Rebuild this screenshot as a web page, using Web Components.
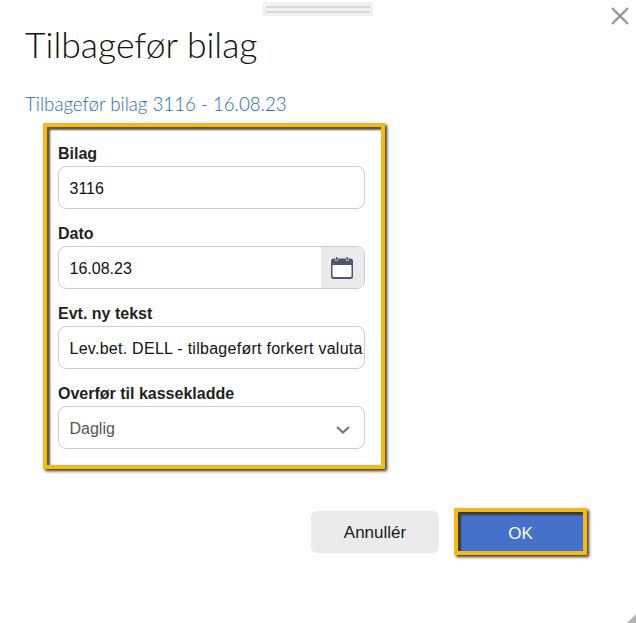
<!DOCTYPE html>
<html lang="da">
<head>
<meta charset="utf-8">
<title>Tilbagefør bilag</title>
<style>
html,body{margin:0;padding:0;background:#fff;}
body{font-family:"Liberation Sans",Arial,sans-serif;}
</style>
</head>
<body>

<template id="dialog-tpl">
<style>
:host{
    display:block;
    position:relative;
    width:636px;
    height:623px;
    background:#fff;
    overflow:hidden;
    box-sizing:border-box;
    padding:24px 0 0 25px;
}
.handle{
    position:absolute;
    top:2px;
    left:263px;
    width:110px;
    height:14px;
    background:#f1f1f1;
}
.handle::before,.handle::after{
    content:'';
    position:absolute;
    left:3px;
    right:3px;
    height:2px;
    background:#d8d8d8;
}
.handle::before{top:4px;}
.handle::after{top:9px;}
.close{
    position:absolute;
    top:7px;
    left:611px;
    width:18px;
    height:18px;
}
.grip{
    position:absolute;
    right:0;
    bottom:0;
    width:0;
    height:0;
    border-style:solid;
    border-width:0 0 9px 9px;
    border-color:transparent transparent #b4b4b4 transparent;
}
h1{
    margin:0;
    font:300 35.5px/42px Lato,"Open Sans",sans-serif;
    color:#111;
}
h2{
    margin:28px 0 0;
    font:300 18.7px/20px Lato,"Open Sans",sans-serif;
    color:#1c6cb0;
}
.body{margin:9px 0 0 18px;}
.actions{
    display:flex;
    align-items:center;
    justify-content:flex-end;
    gap:15px;
    margin:39px 49px 0 0;
}
</style>
<div class="handle"></div>
<svg class="close" viewBox="0 0 18 18" fill="none" stroke="#959595" stroke-width="2.4"><path d="M1 1 L17 17 M17 1 L1 17"/></svg>
<h1><slot name="title"></slot></h1>
<h2><slot name="subtitle"></slot></h2>
<div class="body"><slot></slot></div>
<div class="actions"><slot name="actions"></slot></div>
<div class="grip"></div>
</template>

<template id="frame-tpl">
<style>
:host{
    display:flex;
    flex-direction:column;
    gap:14px;
    box-sizing:border-box;
    width:342px;
    height:346px;
    padding:16px 16px 16px 11px;
    background:#fff;
    border:4px solid #ffb900;
    box-shadow:inset 3px 3px 2px #555, 2px 2px 3px #333;
}
</style>
<slot></slot>
</template>

<template id="field-tpl">
<style>
:host{
    display:block;
    font-family:"Liberation Sans",Arial,sans-serif;
}
.label{
    font-size:16px;
    line-height:22px;
    font-weight:bold;
    color:#1f1f1f;
    margin-bottom:1px;
}
.box{
    display:flex;
    align-items:stretch;
    box-sizing:border-box;
    height:43px;
    border:1px solid #cdcdcd;
    border-radius:8px;
    overflow:hidden;
    background:#fff;
}
.value{
    flex:1;
    min-width:0;
    display:flex;
    align-items:center;
    padding:2px 0 0 10.5px;
    font-size:16px;
    white-space:nowrap;
    overflow:hidden;
    color:#111;
}
:host([type=select]) .value{color:#555;}
:host([wide]) .value{letter-spacing:.27px;}
.addon{display:none;}
:host([type=date]) .addon{
    display:flex;
    align-items:center;
    justify-content:center;
    width:43px;
    background:#ebebeb;
}
.chev{display:none;}
:host([type=select]) .chev{
    display:flex;
    align-items:center;
    justify-content:center;
    width:42px;
    padding-top:4px;
}
</style>
<div class="label"><slot name="label"></slot></div>
<div class="box">
    <div class="value"><slot></slot></div>
    <div class="addon">
        <svg width="24" height="24" viewBox="0 0 24 24" style="margin-left:-1px">
            <rect x="1" y="2.5" width="22" height="20.5" rx="2.5" fill="#51566f"/>
            <rect x="2.5" y="9" width="19" height="12" rx="1" fill="#fff"/>
            <rect x="5.5" y="1" width="2.5" height="4" fill="#ebebeb"/>
            <rect x="16" y="1" width="2.5" height="4" fill="#ebebeb"/>
            <rect x="6" y="1" width="1.5" height="3.5" fill="#51566f"/>
            <rect x="16.5" y="1" width="1.5" height="3.5" fill="#51566f"/>
        </svg>
    </div>
    <div class="chev">
        <svg width="14" height="8" viewBox="0 0 14 8" fill="none" stroke="#757575" stroke-width="2.2"><path d="M1 1 L7 6.5 L13 1"/></svg>
    </div>
</div>
</template>

<template id="button-tpl">
<style>
:host{
    display:inline-flex;
    align-items:center;
    justify-content:center;
    box-sizing:border-box;
    width:128px;
    height:42px;
    border-radius:6px;
    background:#ebebeb;
    color:#1a1a1a;
    font:17px "Liberation Sans",Arial,sans-serif;
    padding-top:3px;
}
:host([primary]){
    width:133px;
    height:47px;
    border-radius:0;
    background:#4472ca;
    color:#fff;
    font-size:17px;
    padding-top:4px;
    border:4px solid #ffb900;
    box-shadow:inset 3px 3px 2px #2a3a60, 2px 2px 3px #333;
}
</style>
<slot></slot>
</template>

<script>
function define(name, tplId){
    customElements.define(name, class extends HTMLElement{
        constructor(){
            super()
            this.attachShadow({mode:'open'})
            this.shadowRoot.appendChild(document.getElementById(tplId).content.cloneNode(true))
        }
    })
}

define('bilag-dialog','dialog-tpl')
define('bilag-frame','frame-tpl')
define('bilag-field','field-tpl')
define('bilag-button','button-tpl')
</script>

<bilag-dialog>
    <span slot="title">Tilbagefør bilag</span>
    <span slot="subtitle">Tilbagefør bilag 3116 - 16.08.23</span>
    <bilag-frame>
        <bilag-field><span slot="label">Bilag</span>3116</bilag-field>
        <bilag-field type="date"><span slot="label">Dato</span>16.08.23</bilag-field>
        <bilag-field wide><span slot="label">Evt. ny tekst</span>Lev.bet. DELL - tilbageført forkert valuta</bilag-field>
        <bilag-field type="select"><span slot="label">Overfør til kassekladde</span>Daglig</bilag-field>
    </bilag-frame>
    <bilag-button slot="actions">Annullér</bilag-button>
    <bilag-button slot="actions" primary>OK</bilag-button>
</bilag-dialog>

</body>
</html>
